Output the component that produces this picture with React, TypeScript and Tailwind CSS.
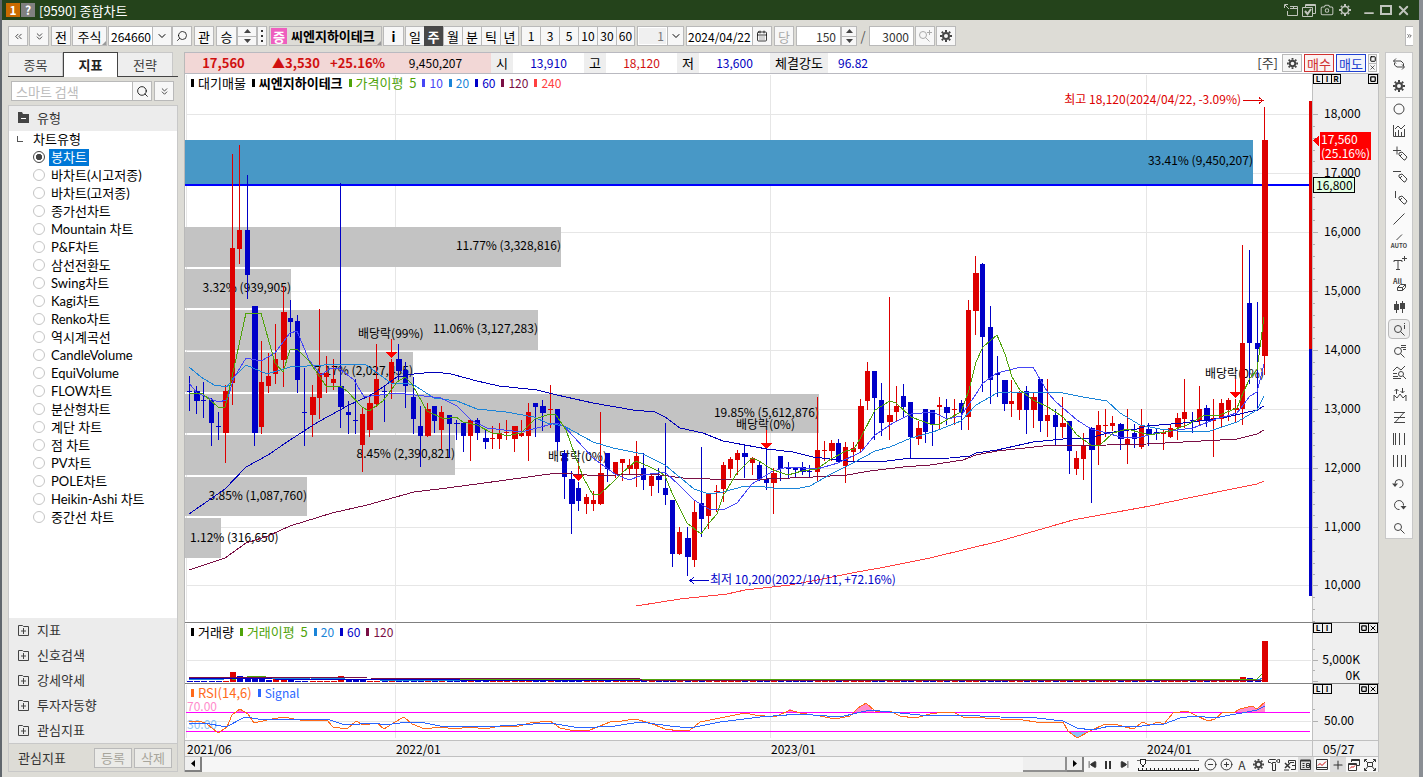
import { ReactNode, useState } from "react";
import {
  Search, ChevronDown, ChevronsLeft, ChevronsDown, ChevronsRight, Camera, CalendarDays,
  X, Minus, Square, CirclePlus, CircleMinus, Plus, SkipBack, SkipForward,
} from "lucide-react";

type Candle = [number, number, number, number, number];

/* [up, high, body top, body bottom, low] */
const CANDLES: Candle[] = [
  [0,376,391,392,410],[0,386,391,401,413],[0,382,400,401,417],[0,398,400,423,445],[0,412,426,427,439],
  [1,385,391,433,462],[1,154,248,383,404],[1,145,230,249,263],[0,175,230,275,298],[0,306,306,433,445],
  [1,341,382,427,433],[1,353,376,386,392],[1,324,359,374,383],[1,286,312,360,386],[0,300,318,322,336],
  [0,315,321,380,392],[0,368,412,413,445],[1,385,397,415,436],[1,309,373,398,418],[1,356,373,377,392],
  [1,359,379,383,389],[0,183,386,407,427],[0,401,412,415,433],[0,379,420,421,433],[1,407,414,445,471],
  [1,395,403,430,436],[1,344,379,404,406],[0,386,391,392,421],[1,359,362,383,398],[0,344,359,371,380],
  [0,362,370,386,407],[0,377,397,419,433],[0,406,426,436,466],[1,403,409,436,436],[0,406,406,421,432],
  [1,406,412,430,448],[0,415,415,424,457],[0,420,423,424,439],[0,423,423,436,451],[1,420,420,436,460],
  [0,418,420,433,439],[0,430,438,442,448],[1,426,438,439,448],[1,423,433,439,448],[1,420,432,433,439],
  [1,426,426,439,451],[1,420,433,436,436],[1,403,412,436,460],[0,403,403,407,436],[0,400,406,413,430],
  [1,385,409,410,427],[0,409,409,442,450],[0,450,453,477,498],[0,471,479,504,533],[0,482,488,501,510],
  [1,494,497,504,513],[1,491,500,504,510],[1,412,473,504,504],[0,453,453,469,481],[1,462,462,474,477],
  [1,459,459,463,480],[1,459,465,469,474],[1,441,456,469,486],[0,453,468,480,489],[1,474,476,486,495],
  [0,468,476,480,492],[0,423,488,495,504],[0,500,500,554,566],[1,527,532,554,554],[0,527,538,557,575],
  [1,501,512,560,566],[0,447,503,519,536],[1,493,494,516,528],[1,485,491,492,511],[1,462,465,489,501],
  [1,457,459,469,477],[1,450,453,460,474],[0,445,453,457,477],[1,457,458,463,474],[0,462,465,480,480],
  [0,449,479,483,489],[1,468,473,483,513],[0,456,456,469,480],[0,462,468,469,477],[0,468,468,470,476],
  [0,462,467,472,474],[0,465,471,472,477],[1,397,450,472,481],[1,441,450,451,460],[1,440,443,451,460],
  [0,439,443,462,462],[1,442,447,466,482],[1,442,448,452,462],[1,399,406,449,451],[1,362,371,401,409],
  [0,371,371,398,439],[0,383,400,423,435],[1,297,415,422,439],[1,386,406,412,421],[0,384,396,407,417],
  [0,402,402,437,458],[1,421,428,439,444],[0,409,409,432,442],[0,410,410,425,445],[1,397,405,407,429],
  [0,399,407,413,424],[1,399,409,410,424],[0,400,403,413,429],[1,300,310,417,429],[1,256,273,311,334],
  [0,263,264,337,391],[0,306,327,380,403],[0,356,373,375,396],[0,380,380,404,410],[1,380,401,404,416],
  [1,391,392,410,419],[0,386,391,410,433],[1,392,397,410,427],[0,379,379,421,431],[1,379,415,421,436],
  [0,409,415,427,444],[1,397,423,427,437],[0,421,421,451,473],[1,451,458,469,474],[1,433,445,459,479],
  [0,427,428,450,502],[1,411,425,445,464],[1,409,425,426,436],[1,416,423,426,430],[0,423,424,439,449],
  [1,409,439,444,463],[0,424,433,439,447],[1,409,426,447,448],[0,423,429,434,445],[0,429,432,433,439],
  [1,429,432,434,449],[1,425,428,437,437],[1,413,418,427,439],[1,379,412,419,427],[0,412,420,421,432],
  [1,386,409,421,425],[0,405,408,421,426],[1,399,418,421,456],[1,399,403,419,427],[1,398,400,410,420],
  [1,399,408,410,421],[1,245,343,409,424],[0,250,303,343,383],[0,302,343,349,410],[1,107,140,356,374],
];

const VOLUME: Record<number, [number, number]> = {
  6:[1,10],7:[0,6],8:[0,4],9:[0,4],10:[0,4],11:[0,2],12:[1,3],13:[1,3],14:[0,2],21:[1,6],22:[0,3],23:[0,3],24:[0,3],
  31:[0,2],108:[1,2],109:[1,2],146:[1,5],147:[0,4],148:[0,3],149:[1,41],
};

const AVERAGES: { color: string; points: string }[] = [
  { color: "#ff4040", points: "636,606 680,599 727,594 745,590 790,585 817,580 857,572 880,568 930,558 1000,541 1073,520 1150,506 1193,497 1237,488 1257,484 1264,481" },
  { color: "#7a0f45", points: "189,570 225,558 246,543 268,536 290,526 332,513 367,505 414,492 447,488 499,481 557,473 573,474 600,476 630,474 660,475 683,478 710,479 767,479 813,477 847,475 870,471 903,467 930,465 963,460 976,455 997,451 1043,446 1107,445 1147,444 1183,442 1220,440 1237,439 1257,434 1264,430" },
  { color: "#0000b8", points: "189,514 225,489 246,467 268,455 290,440 304,431 318,422 340,410 347,406 369,396 383,387 397,377 414,374 434,372 451,374 477,381 499,386 537,390 557,395 593,403 633,410 655,412 665,417 680,428 703,433 723,441 745,445 767,449 793,452 813,457 847,461 887,461 903,459 950,458 970,456 976,453 997,450 1033,442 1063,439 1091,438 1107,433 1137,429 1147,426 1183,423 1207,420 1227,417 1257,410 1264,406" },
  { color: "#1a84d8", points: "189,367 201,377 214,385 227,387 234,377 246,365 267,374 290,367 341,364 366,365 376,372 391,383 404,383 414,385 434,398 457,401 477,409 506,412 534,417 547,423 564,426 593,442 613,448 643,454 665,465 694,489 709,494 723,492 745,486 757,486 773,488 800,488 810,486 831,474 853,463 875,451 890,447 911,438 933,432 961,421 976,405 997,393 1010,392 1063,393 1083,397 1107,401 1120,413 1140,425 1160,429 1187,432 1210,431 1237,422 1257,410 1264,396" },
  { color: "#4646f5", points: "189,383 197,393 218,402 227,400 234,378 246,358 261,361 275,353 290,333 297,331 309,360 321,375 331,368 340,369 354,380 364,397 371,396 397,393 424,396 441,398 457,406 471,420 487,428 504,430 521,432 537,428 556,423 564,426 593,458 615,474 629,480 643,475 665,472 680,486 694,500 709,509 723,510 737,503 752,484 773,471 788,467 817,469 838,463 861,452 875,435 893,423 911,414 933,412 947,419 961,416 976,394 983,383 997,373 1017,368 1033,367 1048,393 1056,402 1077,420 1091,429 1107,433 1120,437 1137,438 1153,434 1177,430 1193,428 1213,420 1237,413 1250,396 1257,392 1264,364" },
  { color: "#4fa30a", points: "189,393 203,394 218,407 225,407 232,377 246,313 261,313 275,363 283,372 290,350 297,349 309,361 326,386 340,386 347,391 362,407 369,411 383,401 397,382 405,377 412,384 427,411 444,419 456,417 463,422 477,425 492,433 499,433 506,436 521,433 535,419 550,414 556,415 566,430 583,477 593,495 600,494 615,480 622,473 636,461 650,467 660,472 665,476 672,493 687,523 701,534 709,523 717,514 723,496 737,473 752,458 759,461 773,470 788,475 802,471 817,469 831,459 846,451 854,449 861,437 875,410 890,401 896,403 911,417 933,425 940,424 948,419 961,412 969,390 976,362 983,347 997,335 1005,354 1012,377 1020,390 1033,400 1048,407 1063,417 1077,435 1091,445 1100,445 1113,433 1127,429 1142,433 1150,435 1170,431 1187,425 1203,416 1220,415 1237,408 1243,393 1250,378 1257,370 1264,317" },
];

/* [top, height, right edge, label] */
const PROFILE: [number, number, number, string][] = [
  [227,40,561,"11.77% (3,328,816)"],[269,39,291,"3.32% (939,905)"],[310,40,538,"11.06% (3,127,283)"],
  [352,40,413,"7.17% (2,027,435)"],[394,39,819,"19.85% (5,612,876)"],[435,40,455,"8.45% (2,390,821)"],
  [477,39,307,"3.85% (1,087,760)"],[518,40,221,"1.12% (316,650)"],
];

const PRICE_LINES = [114, 173, 232, 291, 350, 409, 468, 527, 585];
const YEAR_LINES = [186, 395, 770, 1146];
const RSI = "189,721 200,721 207,724 218,733 227,727 232,715 240,709 248,714 254,723 267,720 283,717 300,720 327,720 333,727 347,729 356,721 363,725 377,723 384,729 395,722 404,717 412,724 425,729 440,727 455,729 470,727 485,729 500,726 515,727 530,723 550,721 560,728 575,731 590,730 610,722 622,721 635,719 650,723 665,729 680,731 690,730 700,722 715,719 730,716 745,713 755,715 775,717 790,710 800,713 820,716 835,719 850,716 858,708 866,703 875,711 890,711 900,716 915,718 930,714 945,712 955,713 965,718 975,717 985,718 1000,719 1017,719 1042,723 1063,722 1068,731 1077,738 1090,731 1105,724 1115,724 1125,727 1134,729 1142,722 1150,725 1158,722 1164,724 1173,713 1187,711 1197,716 1208,721 1215,719 1223,712 1233,713 1240,709 1252,706 1257,709 1265,702";
const SIGNAL = "189,723 205,723 226,727 245,717 258,719 327,719 345,725 376,723 384,725 400,723 420,722 440,726 500,726 550,723 580,728 615,726 640,722 670,726 690,728 720,722 760,717 800,714 840,717 870,710 890,712 930,716 960,715 1000,717 1037,718 1063,721 1077,728 1092,730 1110,726 1134,727 1150,725 1164,724 1180,718 1195,716 1215,718 1230,715 1242,713 1257,710 1265,706";

const CHART_TYPES = [
  "봉차트","바차트(시고저종)","바차트(고저종)","종가선차트","Mountain 차트","P&F차트","삼선전환도","Swing차트","Kagi차트",
  "Renko차트","역시계곡선","CandleVolume","EquiVolume","FLOW차트","분산형차트","계단 차트","점 차트","PV차트","POLE차트",
  "Heikin-Ashi 차트","중간선 차트",
];

const candleX = (i: number) => Math.floor(189.4 + 7.214 * i);
const paint = (up: number) => (up ? "#dd0000" : "#0000c8");

const BTN = "flex h-5 shrink-0 items-center justify-center border border-[#b9b9b9] bg-[#f7f7f7] text-[13px] leading-none text-black";

function Btn({ w, label, className = "", children }: { w: string; label?: string; className?: string; children: ReactNode }) {
  return <button type="button" aria-label={label} className={`${BTN} ${w} ${className}`}>{children}</button>;
}

function Spinner({ w }: { w: string }) {
  return (
    <span className={`flex h-5 shrink-0 flex-col border border-[#b9b9b9] bg-[#f7f7f7] ${w}`}>
      <button type="button" aria-label="증가" className="flex flex-1 items-center justify-center border-b border-[#b9b9b9]">
        <svg width="7" height="4"><path d="M0 4 3.500 0 7 4z" fill="#444" /></svg>
      </button>
      <button type="button" aria-label="감소" className="flex flex-1 items-center justify-center">
        <svg width="7" height="4"><path d="M0 0h7L3.500 4z" fill="#444" /></svg>
      </button>
    </span>
  );
}

function Gear({ size = 12, color = "#444" }: { size?: number; color?: string }) {
  return (
    <svg width={size} height={size} viewBox="0 0 12 12" fill="none" stroke={color}>
      <circle cx="6" cy="6" r="3" strokeWidth="2" />
      <path strokeWidth="2" d="M6 0v2M6 10v2M0 6h2M10 6h2M1.800 1.800l1.300 1.300M8.900 8.900l1.300 1.300M1.800 10.200l1.300-1.300M8.900 3.100l1.300-1.300" />
    </svg>
  );
}

function Toolbar() {
  return (
    <div className="flex h-8 items-center overflow-hidden pl-1.5 pr-1.5">
      <Btn w="w-5" label="이전"><ChevronsLeft size={11} strokeWidth={1.5} /></Btn>
      <Btn w="w-5" label="펼치기" className="ml-px"><ChevronsDown size={11} strokeWidth={1.5} /></Btn>
      <Btn w="w-5" className="ml-0.5">전</Btn>
      <Btn w="w-[35px]" className="relative ml-px">주식<svg width="4" height="4" className="absolute bottom-0 right-0"><path d="M4 0v4H0z" fill="#999" /></svg></Btn>
      <input aria-label="종목코드" defaultValue="264660" className="ml-px h-5 w-[45px] border border-[#b9b9b9] bg-white pl-0.5 text-[12px]" />
      <Btn w="w-5" label="종목 목록" className="-ml-px"><ChevronDown size={12} /></Btn>
      <Btn w="w-5" label="종목 검색"><Search size={12} strokeWidth={1.5} className="-scale-x-100" /></Btn>
      <Btn w="w-5" className="ml-0.5">관</Btn>
      <Btn w="w-[21px]" className="ml-0.5">승</Btn>
      <Spinner w="w-5" />
      <Btn w="w-2.5" label="더보기"><svg width="2" height="12"><path d="M0 0h2v2H0zM0 5h2v2H0zM0 10h2v2H0z" fill="#333" /></svg></Btn>
      <button type="button" className="relative ml-0.5 flex h-5 w-[113px] shrink-0 items-center gap-1 overflow-hidden whitespace-nowrap border border-[#b9b9b9] bg-[#dddcd6] pl-px text-[13px] font-bold">
        <span className="flex size-4 shrink-0 items-center justify-center bg-[#ee5fbf] text-[13px] leading-none text-white">증</span>씨엔지하이테크
        <svg width="4" height="4" className="absolute bottom-0 right-0"><path d="M4 0v4H0z" fill="#999" /></svg>
      </button>
      <Btn w="w-[21px]" className="ml-px font-bold">i</Btn>
      <span className="ml-px flex">
        {["일", "주", "월", "분", "틱", "년"].map((p) => (
          <button key={p} type="button" className={p === "주"
            ? "flex h-5 w-[19px] items-center justify-center bg-[#484848] text-[13px] font-bold leading-none text-white"
            : "flex h-5 w-[19px] items-center justify-center border border-r-0 border-[#b9b9b9] bg-[#f7f7f7] text-[13px] leading-none last:border-r"}>{p}</button>
        ))}
      </span>
      <span className="ml-0.5 flex">
        {["1", "3", "5", "10", "30", "60"].map((p) => (
          <button key={p} type="button" className="flex h-5 w-[19px] items-center justify-center border border-r-0 border-[#b9b9b9] bg-[#f7f7f7] text-[12px] leading-none last:border-r">{p}</button>
        ))}
      </span>
      <span className="ml-0.5 flex h-5 w-[31px] border border-[#b9b9b9] bg-white p-px">
        <input aria-label="주기" defaultValue="1" className="w-full bg-[#f0f0f0] pr-0.5 text-right text-[12px] text-[#777]" />
      </span>
      <Btn w="w-[17px]" label="주기 목록" className="-ml-px"><ChevronDown size={12} /></Btn>
      <input aria-label="일자" defaultValue="2024/04/22" className="ml-0.5 h-5 w-[67px] border border-[#b9b9b9] bg-white pl-px text-[12px]" />
      <Btn w="w-5" label="달력" className="-ml-px"><CalendarDays size={12} strokeWidth={1.5} /></Btn>
      <Btn w="w-5" className="ml-0.5 !text-[#aaa]">당</Btn>
      <input aria-label="표시 개수" defaultValue="150" className="ml-0.5 h-5 w-[45px] border border-[#b9b9b9] bg-white pr-1 text-right text-[12px] text-[#333]" />
      <Spinner w="w-4" />
      <span className="w-3 text-center text-[13px] text-[#555]">/</span>
      <input aria-label="전체 개수" defaultValue="3000" className="h-5 w-[45px] border border-[#b9b9b9] bg-white pr-1 text-right text-[12px] text-[#333]" />
      <Btn w="w-5" label="추가 검색" className="ml-px !text-[#aaa]">
        <svg width="14" height="14" viewBox="0 0 14 14" fill="none" stroke="currentColor"><circle cx="5" cy="6" r="3.500" /><path d="M7.500 8.500l4 4M9 3.500h5M11.500 1v5" /></svg>
      </Btn>
      <Btn w="w-5" label="설정" className="ml-px"><Gear /></Btn>
      <button type="button" aria-label="도구 더보기" className="ml-auto flex h-5 w-2 items-center border border-r-0 border-[#b9b9b9] bg-white"><ChevronsRight size={8} /></button>
    </div>
  );
}

function Sidebar() {
  const [type, setType] = useState("봉차트");
  return (
    <aside className="flex w-[170px] shrink-0 flex-col text-[13px]">
      <div className="flex h-[25px] shrink-0 border-b border-[#444]">
        <button type="button" className="w-[55px] border border-b-0 border-[#c8c8c8] bg-[#eee] text-[#444]">종목</button>
        <button type="button" className="-mb-px w-[55px] border border-b-0 border-[#444] bg-white font-bold text-[#222]">지표</button>
        <button type="button" className="w-[55px] border border-b-0 border-l-0 border-[#c8c8c8] bg-[#eee] text-[#444]">전략</button>
      </div>
      <div className="mt-1 flex pl-[3px]">
        <input aria-label="스마트 검색" placeholder="스마트 검색" className="h-5 w-[122px] border border-[#b9b9b9] bg-white pl-1 text-[13px] placeholder:text-[#bbb]" />
        <Btn w="w-5" label="검색" className="-ml-px"><Search size={13} strokeWidth={1.5} /></Btn>
        <Btn w="w-5" label="펼치기" className="ml-0.5"><ChevronsDown size={11} strokeWidth={1.5} /></Btn>
      </div>
      <div className="mt-1 flex flex-1 flex-col border border-[#c8c8c8] bg-white">
        <h2 className="flex h-[25px] items-center gap-2 bg-[#ececec] pb-0.5 pl-[9px] text-[#333]">
          <svg width="11" height="11" viewBox="0 0 11 11"><path d="M0 0h4l1 2h6v9H0z" fill="#444" /><path d="M3 6.500h5" stroke="#fff" /></svg>유형
        </h2>
        <div className="flex h-[17px] items-center pb-0.5 pl-2"><span className="mr-2.5 size-1.5 border-b border-l border-[#555]" />차트유형</div>
        <div className="pl-6 font-['Lato','Noto_Sans_CJK_KR',sans-serif]">
          {CHART_TYPES.map((t) => (
            <label key={t} className="flex h-[18px] items-center gap-1">
              <input type="radio" name="chart-type" checked={type === t} onChange={() => setType(t)}
                className="size-3 appearance-none rounded-full border border-[#c4c4c4] bg-white checked:border-[#444] checked:bg-[radial-gradient(#444_40%,#fff_50%)]" />
              <span className={type === t ? "whitespace-nowrap bg-[#0078d7] px-0.5 leading-[17px] text-white" : "whitespace-nowrap px-0.5 leading-[17px]"}>{t}</span>
            </label>
          ))}
        </div>
        <div className="mt-auto bg-[#ececec]">
          {["지표", "신호검색", "강세약세", "투자자동향", "관심지표"].map((g) => (
            <button key={g} type="button" className="flex h-[25px] w-full items-center gap-2 pb-0.5 pl-[9px] text-[#333]">
              <svg width="11" height="12" viewBox="0 0 11 12" fill="none" stroke="#444"><path d="M.5 11.500V1.500H4.500L5.500 2.500H10.500V11.500zM5.500 4v6M3 7h5" /></svg>{g}
            </button>
          ))}
        </div>
        <div className="flex h-[28px] items-center gap-0.5 border-t border-[#c8c8c8] bg-[#dddcd6] pl-[9px] pr-[5px] text-[#333]">
          <span className="mr-auto">관심지표</span>
          <Btn w="w-[38px]" className="!bg-[#ebebe8] !text-[#a7a59b]">등록</Btn>
          <Btn w="w-[38px]" className="!bg-[#ebebe8] !text-[#a7a59b]">삭제</Btn>
        </div>
      </div>
    </aside>
  );
}

function QuoteBar() {
  const label = "flex h-full items-center justify-center bg-[#eee] text-[13px]";
  return (
    <div className="flex h-[22px] items-center border-b border-t border-[#b9b9c0] bg-white text-[12px]">
      <div className="flex h-full w-[306px] items-center bg-[#f2d7d6] text-center text-[13px] font-bold text-[#d01010]">
        <span className="w-[77px]">17,560</span>
        <span className="w-[68px]">▲3,530</span>
        <span className="w-[50px]">+25.16%</span>
        <span className="w-[111px] text-[12px] font-normal text-black">9,450,207</span>
      </div>
      <span className={`${label} w-[22px]`}>시</span><span className="w-[71px] text-center text-[#0000c0]">13,910</span>
      <span className={`${label} w-[22px]`}>고</span><span className="w-[71px] text-center text-[#d01010]">18,120</span>
      <span className={`${label} w-[22px]`}>저</span><span className="w-[71px] text-center text-[#0000c0]">13,600</span>
      <span className={`${label} w-[58px]`}>체결강도</span><span className="pl-2.5 text-[#0000c0]">96.82</span>
      <span className="ml-auto mr-1 text-[13px] text-[#333]">[주]</span>
      <button type="button" aria-label="차트 설정" className="flex h-[18px] w-5 items-center justify-center border border-[#b9b9b9] bg-[#f7f7f7]"><Gear size={11} /></button>
      <button type="button" className="ml-0.5 h-[18px] w-[30px] border border-[#d03030] bg-[#fbf3f3] text-[13px] leading-none text-[#d03030]">매수</button>
      <button type="button" className="ml-0.5 h-[18px] w-[30px] border border-[#2040d0] bg-[#f3f5fb] text-[13px] leading-none text-[#2040d0]">매도</button>
      <span className="ml-0.5 mr-0.5 flex h-[18px] w-[9px] flex-col border border-[#b9b9b9] bg-[#f7f7f7]">
        <button type="button" aria-label="최대화" className="flex flex-1 items-center justify-center"><Square size={6} strokeWidth={4} /></button>
        <button type="button" aria-label="닫기" className="flex flex-1 items-center justify-center border-t border-[#b9b9b9]"><X size={7} /></button>
      </span>
    </div>
  );
}

function Legend({ items }: { items: [string, string, string?][] }) {
  return (
    <ul className="absolute left-1.5 top-0 flex items-center gap-1.5 whitespace-nowrap text-[12px] leading-[18px]">
      {items.map(([text, color, style]) => (
        <li key={text} className="flex items-center gap-1" style={{ color }}>
          <i className="h-2 w-[3px] bg-current" /><span className={style}>{text}</span>
        </li>
      ))}
    </ul>
  );
}

function PaneButtons({ left, right }: { left: string[]; right: string[] }) {
  const cls = "-ml-px flex h-2.5 w-2.5 items-center justify-center border border-black bg-[#efefef] text-[8px] font-bold leading-none first:ml-0";
  return (
    <div className="absolute inset-x-0 top-0 flex justify-between">
      <span className="flex">{left.map((l) => <button key={l} type="button" className={cls}>{l}</button>)}</span>
      <span className="flex">
        {right.map((r) => (
          <button key={r} type="button" aria-label={r} className={cls}>{r === "닫기" ? <X size={8} strokeWidth={3} /> : <Square size={6} strokeWidth={5} />}</button>
        ))}
      </span>
    </div>
  );
}

function DownMark({ x, y, text, tx }: { x: number; y: number; text: string; tx: number }) {
  return (
    <g>
      <text x={tx} y={y - 14} fontSize="12">{text}</text>
      <path d={`M${x + 0.5} ${y - 13}V${y}`} stroke="#f00" />
      <path d={`M${x - 5} ${y}h11l-5.500 6z`} fill="#f00" />
    </g>
  );
}

function PricePane() {
  return (
    <div className="flex bg-white">
      <div className="relative min-w-0 flex-1">
        <svg viewBox="185 74 1127 548" preserveAspectRatio="xMinYMin slice" className="block h-[548px] w-full" shapeRendering="crispEdges">
          <g stroke="#e6e6e6">
            {PRICE_LINES.map((y) => <path key={y} d={`M186 ${y + 0.5}H1309`} />)}
            {YEAR_LINES.map((x) => <path key={x} d={`M${x + 0.5} 75V620`} />)}
          </g>
          <rect x="185" y="140" width="1068" height="45" fill="#4898c6" />
          {PROFILE.map(([y, h, r, t]) => <rect key={t} x="185" y={y} width={r - 185} height={h} fill="#c3c3c3" />)}
          <path d="M185 185H1311" stroke="#0000ff" strokeWidth="2" />
          <g fontSize="12">
            <text x="1253" y="165" textAnchor="end">33.41% (9,450,207)</text>
            {PROFILE.map(([y, h, r, t]) => r < 230
              ? <text key={t} x="190" y={y + 24}>{t}</text>
              : <text key={t} x={r} y={y + Math.round(h / 2) + 3} textAnchor="end">{t}</text>)}
          </g>
          <DownMark x={391} y={352} tx={358} text="배당락(99%)" />
          <DownMark x={578} y={475} tx={548} text="배당락(0%)" />
          <DownMark x={766} y={443} tx={736} text="배당락(0%)" />
          <DownMark x={1235} y={392} tx={1205} text="배당락(0%)" />
          {CANDLES.map(([up, hi, top, bot, lo], i) => (
            <g key={i} fill={paint(up)}>
              <rect x={candleX(i)} y={hi} width="1" height={lo - hi + 1} />
              <rect x={candleX(i) - 2} y={top} width={i % 4 === 1 ? 6 : 5} height={Math.max(1, bot - top)} />
            </g>
          ))}
          <g fill="none">{AVERAGES.map((a) => <polyline key={a.color} points={a.points} stroke={a.color} />)}</g>
          <text x="1241" y="104" fontSize="12" fill="#dd0000" textAnchor="end">최고 18,120(2024/04/22, -3.09%)</text>
          <path d="M1243 100.500H1264M1259 97.500l4 3-4 3" stroke="#dd0000" fill="none" />
          <text x="710" y="584" fontSize="12" fill="#0000c8">최저 10,200(2022/10/11, +72.16%)</text>
          <path d="M709 580.500H689M694 577.500l-4 3 4 3" stroke="#0000c8" fill="none" />
          <rect x="1309" y="101" width="3" height="248" fill="#dd0000" />
          <rect x="1309" y="349" width="3" height="247" fill="#0000c8" />
        </svg>
        <Legend items={[["대기매물", "#000", "text-[13px]"], ["씨엔지하이테크", "#000", "text-[13px] font-bold"], ["가격이평  5", "#4fa30a", "whitespace-pre text-[13px]"], ["10", "#4646f5"], ["20", "#1a84d8"], ["60", "#0000c8"], ["120", "#7a0f45"], ["240", "#ff4040"]]} />
      </div>
      <div className="relative w-[67px] shrink-0 border-l border-r border-[#c0c0c0] bg-[#efefef]">
        <svg viewBox="1312 74 65 548" className="block h-[548px] w-[65px]" shapeRendering="crispEdges">
          {PRICE_LINES.map((y, i) => (
            <g key={y}>
              <path d={`M1312 ${y + 0.500}h5M1312 ${y + 12.500}h2M1312 ${y + 24.500}h2M1312 ${y + 36.500}h2M1312 ${y + 47.500}h2`} stroke="#b0b0b0" />
              <text x="1323" y={y + 4} fontSize="12">{`${18 - i},000`}</text>
            </g>
          ))}
          <path d="M1312 140.500l6-5v11z" fill="#f00" />
          <rect x="1319" y="132" width="51" height="28" fill="#f00" />
          <text x="1320" y="144" fontSize="12" fill="#fff">17,560</text>
          <text x="1320" y="158" fontSize="12" fill="#fff">(25.16%)</text>
          <rect x="1312.500" y="177.500" width="41" height="15" fill="#e3ffe3" stroke="#000" />
          <text x="1315" y="190" fontSize="12">16,800</text>
        </svg>
        <PaneButtons left={["L", "I", "R"]} right={["최대화"]} />
      </div>
    </div>
  );
}

function VolumePane() {
  return (
    <div className="flex border-t border-[#808080] bg-white">
      <div className="relative min-w-0 flex-1">
        <svg viewBox="185 623 1127 60" preserveAspectRatio="xMinYMin slice" className="block h-[60px] w-full" shapeRendering="crispEdges">
          <g stroke="#e6e6e6"><path d="M186 660.500H1311" />{YEAR_LINES.map((x) => <path key={x} d={`M${x + 0.5} 624V682`} />)}</g>
          {CANDLES.map(([up], i) => {
            const [c, h] = VOLUME[i] ?? [up, 1];
            return <rect key={i} x={candleX(i) - 2} y={682 - h} width="6" height={h} fill={paint(c)} />;
          })}
          <g fill="none">
            <polyline points="232,680 240,678 254,676 262,676 275,679 1243,680 1257,679 1264,672" stroke="#4fa30a" />
            <polyline points="189,680 225,679 270,678 310,678 380,680 1257,680 1264,678" stroke="#1a84d8" />
            <polyline points="189,678 270,678 272,679 460,680 1264,680" stroke="#0000c8" />
            <polyline points="189,677 366,677 367,678 640,679 642,680 1264,680" stroke="#7a0f45" />
          </g>
          <rect x="1262" y="641" width="5" height="41" fill="#dd0000" />
        </svg>
        <Legend items={[["거래량", "#000", "text-[13px]"], ["거래이평  5", "#4fa30a", "whitespace-pre text-[13px]"], ["20", "#1a84d8"], ["60", "#0000c8"], ["120", "#7a0f45"]]} />
      </div>
      <div className="relative w-[67px] shrink-0 border-l border-r border-[#c0c0c0] bg-[#efefef]">
        <svg viewBox="1312 623 65 60" className="block h-[60px] w-[65px]">
          <path d="M1312 660.500h5M1312 681.500h5M1312 649.500h2M1312 670.500h2" stroke="#b0b0b0" />
          <text x="1359" y="664" fontSize="12" textAnchor="end">5,000K</text>
          <text x="1359" y="680" fontSize="12" textAnchor="end">0K</text>
        </svg>
        <PaneButtons left={["L", "I"]} right={["최대화", "닫기"]} />
      </div>
    </div>
  );
}

function RsiPane() {
  return (
    <div className="flex border-t border-[#808080] bg-white">
      <div className="relative min-w-0 flex-1">
        <svg viewBox="185 684 1127 56" preserveAspectRatio="xMinYMin slice" className="block h-[56px] w-full" shapeRendering="crispEdges">
          <g stroke="#e6e6e6"><path d="M186 721.500H1311" />{YEAR_LINES.map((x) => <path key={x} d={`M${x + 0.5} 685V738`} />)}</g>
          <text x="187" y="711" fontSize="12" fill="#ff8ccc">70.00</text>
          <text x="187" y="729" fontSize="12" fill="#8cc4f4">30.00</text>
          <path d="M235 712l5-3 6 3zM786 712l4-3 7 3zM854 712l4-4 8-5 8 9zM1236 712l4-3 12-3 5 3 8-7v10z" fill="#ff8ccc" />
          <path d="M1068 731l9 7 13-7z" fill="#8cc4f4" />
          <g fill="none">
            <path d="M186 712.500H1310M186 731.500H1310" stroke="#ff00ff" />
            <polyline points={RSI} stroke="#ff6a1a" />
            <polyline points={SIGNAL} stroke="#2a66ff" />
          </g>
        </svg>
        <Legend items={[["RSI(14,6)", "#ff6a1a", "text-[13px]"], ["Signal", "#2a66ff"]]} />
      </div>
      <div className="relative w-[67px] shrink-0 border-l border-r border-[#c0c0c0] bg-[#efefef]">
        <svg viewBox="1312 684 65 56" className="block h-[56px] w-[65px]">
          <path d="M1312 721.500h5M1312 709.500h2" stroke="#b0b0b0" />
          <text x="1323" y="725" fontSize="12">50.00</text>
        </svg>
        <PaneButtons left={["L", "I"]} right={["최대화", "닫기"]} />
      </div>
    </div>
  );
}

function BottomBar() {
  const key = "flex h-full w-[17px] shrink-0 items-center justify-center border-b-2 border-r-2 border-[#808080] bg-[#efefef]";
  const ico = "flex h-full w-4 shrink-0 items-center justify-center text-[#333]";
  return (
    <div className="flex h-[15px] items-center border-r border-[#c0c0c0] bg-[#f7f7f7]">
      <button type="button" aria-label="왼쪽으로" className={key}><svg width="4" height="7"><path d="M4 0v7L0 3.500z" /></svg></button>
      <span className="h-full min-w-0 flex-1 bg-[#f6f6f6]" />
      <span className="h-full w-11 shrink-0 border-b-2 border-r-2 border-[#909090] bg-[#efefef]" />
      <button type="button" aria-label="오른쪽으로" className={key}><svg width="4" height="7"><path d="M0 0v7l4-3.500z" /></svg></button>
      <button type="button" aria-label="처음" className={ico}><SkipBack size={9} fill="currentColor" /></button>
      <button type="button" aria-label="일시정지" className={ico}><svg width="7" height="8"><path d="M0 0h2v8H0zM4 0h2v8H4z" fill="#333" /></svg></button>
      <button type="button" aria-label="끝" className={ico}><SkipForward size={9} fill="currentColor" /></button>
      <svg width="70" height="13" viewBox="0 0 70 13" className="shrink-0" fill="none" stroke="#222" shapeRendering="crispEdges">
        <path d="M5 2.500H67" stroke="#666" /><path d="M8.500 1.500h5v4l-2.500 3-2.500-3z" fill="#fff" />
        <path d="M6 12.500H67" strokeWidth="1" /><path d="M6 11h61" strokeWidth="2" strokeDasharray="1 3" />
      </svg>
      <button type="button" aria-label="축소" className={ico}><CircleMinus size={13} strokeWidth={1.750} /></button>
      <button type="button" aria-label="확대" className={ico}><CirclePlus size={13} strokeWidth={1.750} /></button>
      <button type="button" className={`${ico} text-[12px] leading-none`}>A</button>
      <button type="button" aria-label="설정" className={ico}><Gear size={11} /></button>
      <button type="button" aria-label="서식" className={ico}>
        <svg width="12" height="12" viewBox="0 0 12 12" fill="none" stroke="#333"><path d="M.5 3.500v-2l1-1h6l1 1 2-1h1v3h-1l-2-1-1 1h-3v1h-1l-1-1zM4.500 4.500v7h3v-7" /></svg>
      </button>
      <button type="button" aria-label="삭제" className={ico}>
        <svg width="12" height="12" viewBox="0 0 12 12" fill="none" stroke="#333"><path d="M4.500 4V1.500h7v9H7M6 3.500h4M8 6.500h3" /><path d="M1 4l5 5M6 4L1 9" strokeWidth="1.500" /><path d="M0 11h5" /></svg>
      </button>
      <button type="button" aria-label="표" className={`${ico} bg-[#ddd]`}>
        <svg width="12" height="11" viewBox="0 0 12 11" fill="none" stroke="#333"><path d="M.5 1.500h10v9H.5z" /><path d="M.5 1.500h10" strokeWidth="2" /><path d="M2.500 4.500h2M2.500 6.500h2M2.500 8.500h2M6.500 4.500h3v4h-3zM6.500 6.500h3" /></svg>
      </button>
      <button type="button" aria-label="차트" className={ico}>
        <svg width="12" height="11" viewBox="0 0 12 11" fill="none"><path d="M.5.5h11v10H.5zM.5 8.500h11" stroke="#333" /><path d="M2 6.500l2-2 2 2 4-4" stroke="#c00" /></svg>
      </button>
      <button type="button" aria-label="십자선" className={`${ico} bg-[#ddd]`}><Plus size={14} strokeWidth={1.750} /></button>
      <button type="button" aria-label="복사" className={ico}>
        <svg width="12" height="12" viewBox="0 0 12 12" fill="none"><path d="M3.500 3V.5h8v6H9" stroke="#333" /><path d="M.5 4.500h8v7h-8z" stroke="#333" fill="#fff" /><path d="M3 1.500h8M1 5.500h7" stroke="#333" /><path d="M2 9.500l2-2 1 1 2-2" stroke="#c00" /></svg>
      </button>
      <button type="button" aria-label="전체 화면" className={ico}>
        <svg width="12" height="12" viewBox="0 0 12 12" fill="none" stroke="#333"><path d="M.5 3V.5H3M9 .5h2.500V3M11.500 9v2.500H9M3 11.500H.5V9M3.500 3.500h5v4h-5zM1 1l2.500 2.500M11 1L8.500 3.500M1 11l2.500-3M11 11L8.500 8" /></svg>
      </button>
    </div>
  );
}

const ERASER = <path d="M8 8l3-1 5 5-2 3-1 0-5-5zM9 11l2-2" />;
const LENS = <><circle cx="7" cy="8" r="3.500" /><path d="M9.500 10.500l4 4" /></>;

const DRAW_TOOLS: { name: string; art: ReactNode }[] = [
  { name: "원", art: <circle cx="8" cy="8" r="5" /> },
  { name: "지표 차트", art: <path d="M2.500 2v11.500H14M4.500 13V9M7.500 13V7M10.500 13V9M13.500 13V6M4 6l3-3 3 3 4-4" /> },
  { name: "십자 지우개", art: <><path d="M2 5.500h8M6 1.500v8" />{ERASER}</> },
  { name: "수평선 지우개", art: <><path d="M2 4.500h8" />{ERASER}</> },
  { name: "수직선 지우개", art: <><path d="M4.500 2v7" />{ERASER}</> },
  { name: "추세선", art: <path d="M2.500 13.500l11-11" /> },
  { name: "자동 추세선", art: <><path d="M5.500 7l5.500-5.500" /><text x="8" y="15" fontSize="6" fontWeight="bold" textAnchor="middle" stroke="none" fill="#444">AUTO</text></> },
  { name: "텍스트", art: <path d="M3 7V5.500h8V7M7 5.500v9M5 14.500h4M11 3.500h5M13.500 1v5" /> },
  { name: "모두 지우기", art: <><text x="2" y="7" fontSize="7" fontWeight="bold" stroke="none" fill="#444">All</text><path d="M6.500 10.500l3-3h5l-3 3zM6.500 10.500v3h5v-3M11.500 13.500l3-3v-3" /></> },
  { name: "캔들", art: <><path d="M5.500 2v12M11.500 2v12" /><path d="M3 5h5v6H3zM9 4h5v6H9z" fill="#444" stroke="none" /></> },
  { name: "정보 조회", art: <>{LENS}<path d="M13.500 4v4M13.500 2v1" /></> },
  { name: "목록 조회", art: <>{LENS}<path d="M10 2.500h5M10 4.500h5M12 6.500h3" /></> },
  { name: "패턴 분석", art: <><circle cx="10" cy="9" r="2.500" /><path d="M12 11l3 3M2 6l4-4 4 3 4-4M2 8.500h4M2 11.500h5M2 13.500h8" /></> },
  { name: "신호 분석", art: <path d="M3 14V8l3 3 3-4 3 4 3-3v6M5.500 7V2M3.500 4l2-2 2 2M11.500 1v5M9.500 4l2 2 2-2" /> },
  { name: "피보나치", art: <path d="M3 3.500h11M3 8.500h11M3 13.500h11M13 3.500L4 13.500" /> },
  { name: "시간대", art: <path d="M2.500 2v12M4.500 2v12M8.500 2v12M13.500 2v12" /> },
  { name: "주기선", art: <path d="M2.500 2v12M6.500 2v12M10.500 2v12M14.500 2v12" /> },
  { name: "실행 취소", art: <><path d="M4 8.500a4 4 0 1 1 4.500 4" /><path d="M1 8.500h6l-3 3.500z" fill="#444" stroke="none" /></> },
  { name: "다시 실행", art: <><path d="M8.500 12.500a4.500 4.500 0 1 1 4-4" /><path d="M9.500 9h6l-3 3.500z" fill="#444" stroke="none" /></> },
  { name: "확대 조회", art: LENS },
];

function DrawToolbar() {
  const cell = "flex h-[22px] w-full items-center justify-center";
  return (
    <nav aria-label="그리기 도구" className="flex w-7 shrink-0 flex-col self-start border border-[#c8c8c8] bg-[#fafafa] text-[#444]">
      <div className="border-b border-[#c8c8c8]">
        <button type="button" aria-label="새로 고침" className={cell}>
          <svg width="12" height="12" viewBox="0 0 12 12" fill="none" stroke="#444"><path d="M3 .5L.5 3 3 5.500M.5 3H8L10.500 5.500V8M9 6.500L11.500 9 9 11.500M11 9H4L1.500 7V5" /></svg>
        </button>
        <button type="button" aria-label="설정" className={cell}><Gear /></button>
      </div>
      {DRAW_TOOLS.map((t) => (
        <button key={t.name} type="button" aria-label={t.name} className={cell}>
          <span className={t.name === "정보 조회" ? "flex h-5 w-[22px] items-center justify-center rounded border border-[#b9b9b9] bg-[#eee]" : "flex"}>
            <svg width="16" height="16" viewBox="0 0 16 16" fill="none" stroke="#444" className="overflow-visible">{t.art}</svg>
          </span>
        </button>
      ))}
    </nav>
  );
}

export default function App() {
  return (
    <div className="flex min-h-screen flex-col border-l-2 border-r-4 border-l-[#60666c] border-r-[#8a8e94] bg-[#dddcd6] font-['Noto_Sans_CJK_KR',sans-serif] text-black">
      <header className="flex h-5 shrink-0 items-center bg-[#24431b] pl-1 pr-2 text-white">
        <span className="flex size-3.5 items-center justify-center bg-[#c96a00] text-[12px] font-bold leading-none">1</span>
        <span className="ml-px flex size-3.5 items-center justify-center bg-[#808080] text-[12px] font-bold leading-none">?</span>
        <h1 className="ml-1 text-[13px] leading-none">[9590] 종합차트</h1>
        <div className="ml-auto flex items-center gap-1 text-[#c0c4bc]">
          <button type="button" aria-label="분리">
            <svg width="14" height="13" viewBox="0 0 14 13" fill="none" stroke="currentColor"><path d="M1 1l4 4M.5 4V.5H4" /><path d="M6 2.500h7.500v9h-10V7M6 4.500h7.500M9.500 2v2" /></svg>
          </button>
          <button type="button" aria-label="선택">
            <svg width="14" height="13" viewBox="0 0 14 13" fill="none" stroke="currentColor"><path d="M3.500 3V.5h10v9H11M.5 3.500h10v9H.5zM3.500 1.500h10" /><path d="M3 7l2.500 3L9 5" strokeWidth="2" /></svg>
          </button>
          <button type="button" aria-label="캡처"><Camera size={14} strokeWidth={1.750} /></button>
          <button type="button" aria-label="설정">
            <svg width="14" height="14" viewBox="0 0 14 14" fill="none" stroke="currentColor"><circle cx="7" cy="7" r="3.500" strokeWidth="1.500" /><path strokeWidth="2" d="M7 1v2M7 11v2M1 7h2M11 7h2M3 3l1 1M10 10l1 1M3 11l1-1M10 4l1-1" /></svg>
          </button>
          <button type="button" aria-label="최소화" className="ml-1.5 pt-1.5"><Minus size={14} strokeWidth={3} /></button>
          <button type="button" aria-label="최대화"><svg width="12" height="10"><path d="M1 1h10v8H1z" fill="none" stroke="currentColor" strokeWidth="2" /></svg></button>
          <button type="button" aria-label="닫기"><X size={15} strokeWidth={3} /></button>
        </div>
      </header>
      <Toolbar />
      <div className="flex flex-1 gap-1.5 px-1.5 pb-[5px]">
        <Sidebar />
        <main className="flex min-w-0 flex-1 flex-col border-l border-[#b9b9b9]">
          <QuoteBar />
          <PricePane />
          <VolumePane />
          <RsiPane />
          <div className="flex h-[17px] border-b border-t border-[#c0c0c0] bg-[#efefef] text-[12px] leading-[15px]">
            <div className="flex min-w-0 flex-1 pl-0.5">
              <span className="w-[209px]">2021/06</span><span className="w-[375px]">2022/01</span><span className="w-[376px]">2023/01</span><span>2024/01</span>
            </div>
            <span className="w-[67px] shrink-0 border-l border-r border-[#c0c0c0] pl-2.5">05/27</span>
          </div>
          <BottomBar />
        </main>
        <DrawToolbar />
      </div>
    </div>
  );
}
